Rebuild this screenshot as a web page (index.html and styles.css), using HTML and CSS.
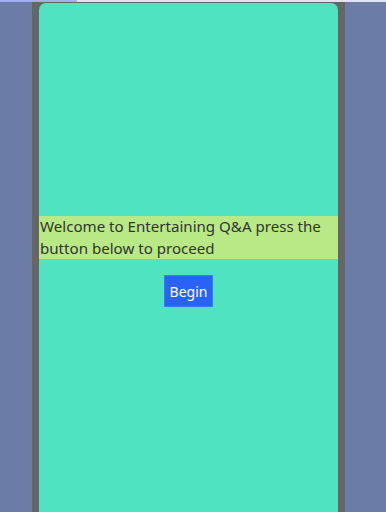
FILE: index.html
```html
<!DOCTYPE html>
<html>
<head>
<meta charset="utf-8">
<link rel="stylesheet" href="styles.css">
</head>
<body>
<div class="topbar"><div class="progress"></div></div>
<div class="frame">
  <div class="card">
    <p class="welcome">Welcome to Entertaining Q&amp;A press the button below to proceed</p>
    <button class="begin">Begin</button>
  </div>
</div>
</body>
</html>
```
FILE: styles.css
```css
html, body {
  margin: 0;
  padding: 0;
}
body {
  background: #6b7ca7;
  font-family: "Noto Sans", "Open Sans", sans-serif;
}
.topbar {
  height: 2px;
  background: #e2e3f3;
}
.progress {
  width: 77px;
  height: 2px;
  background: #a3aef4;
}
.frame {
  margin-left: 32px;
  width: 299px;
  padding: 1px 7px 0;
  background: #666666;
}
.card {
  background: #50e3c2;
  border-radius: 7px 7px 0 0;
  height: 509px;
  padding-top: 213px;
  box-sizing: border-box;
}
.welcome {
  margin: 0;
  padding-left: 1px;
  background: #b8e986;
  color: #333;
  font-size: 15.1px;
  line-height: 21.5px;
}
.begin {
  display: block;
  margin: 16px auto 0;
  width: 49px;
  height: 32px;
  padding: 0;
  background: #2a62f7;
  border: 1px solid #3d78f5;
  color: #fff;
  font-family: "Noto Sans", "Open Sans", sans-serif;
  font-size: 14px;
}
```
